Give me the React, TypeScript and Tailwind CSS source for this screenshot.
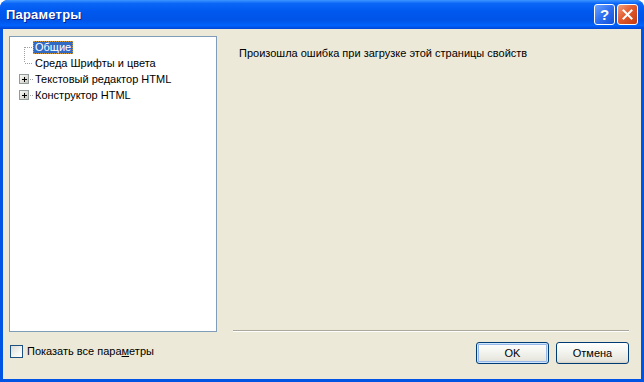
import React from "react";

const Gutter: React.FC<{ kind: "first" | "mid" | "plus" }> = ({ kind }) => (
  <svg width="23" height="16" viewBox="0 0 23 16" shapeRendering="crispEdges" className="shrink-0">
    {kind === "first" && (
      <line x1="14.5" y1="8" x2="14.5" y2="16" stroke="#a0a0a0" strokeDasharray="1 1" />
    )}
    {kind === "mid" && (
      <line x1="14.5" y1="0" x2="14.5" y2="8" stroke="#a0a0a0" strokeDasharray="1 1" />
    )}
    {kind === "plus" ? (
      <>
        <line x1="18" y1="8.5" x2="23" y2="8.5" stroke="#a0a0a0" strokeDasharray="1 1" />
        <rect x="9.5" y="3.5" width="9" height="9" fill="url(#pb)" stroke="#919b9c" />
        <line x1="12" y1="8.5" x2="17" y2="8.5" stroke="#000" />
        <line x1="14.5" y1="6" x2="14.5" y2="11" stroke="#000" />
        <defs>
          <linearGradient id="pb" x1="0" y1="0" x2="1" y2="1">
            <stop offset="0" stopColor="#ffffff" />
            <stop offset="1" stopColor="#c6c5b8" />
          </linearGradient>
        </defs>
      </>
    ) : (
      <line x1="15" y1="8.5" x2="23" y2="8.5" stroke="#a0a0a0" strokeDasharray="1 1" />
    )}
  </svg>
);

const TreeRow: React.FC<{ kind: "first" | "mid" | "plus"; label: string; selected?: boolean }> = ({
  kind,
  label,
  selected,
}) => (
  <div className="flex items-center h-[16px]">
    <Gutter kind={kind} />
    <span
      className={
        selected
          ? "px-[1px] leading-[11px] h-[13px] bg-[#316ac5] text-white border border-dotted border-[#ce953a]"
          : "px-[2px] leading-[13px] text-black"
      }
    >
      {label}
    </span>
  </div>
);

const XpButton: React.FC<{ label: string; primary?: boolean }> = ({ label, primary }) => (
  <button
    className={
      "w-[73px] h-[22px] rounded-[3px] border border-[#003c74] text-[11px] text-black bg-[linear-gradient(to_bottom,#ffffff_0%,#f5f5f1_40%,#e6e5dc_90%,#d6d0c5_100%)] " +
      (primary ? "shadow-[inset_0_0_0_1px_#cee7ff,inset_0_0_0_2px_#98b8ea]" : "")
    }
  >
    {label}
  </button>
);

export default function App() {
  return (
    <div
      className="w-[644px] h-[382px] flex flex-col overflow-hidden rounded-t-[8px] bg-[#0054e3] text-[11px]"
      style={{ fontFamily: '"Liberation Sans", Arial, sans-serif' }}
    >
      <div className="h-[29px] shrink-0 flex items-center pl-[6px] pr-[6px] bg-[linear-gradient(to_bottom,#3d95ff_0%,#0a66f7_12%,#0058ee_40%,#0054e7_70%,#0062fc_88%,#0045d6_100%)]">
        <span className="text-white font-bold text-[13px] tracking-[0.2px] [text-shadow:1px_1px_0_#0a1e8a]">
          Параметры
        </span>
        <div className="ml-auto flex gap-[2px] mt-[-1px]">
          <div className="w-[21px] h-[21px] rounded-[3px] border border-white bg-[linear-gradient(135deg,#6fa3ff_0%,#2d6ff0_50%,#1450d8_100%)] flex items-center justify-center text-white font-bold text-[15px] leading-none">
            ?
          </div>
          <div className="w-[21px] h-[21px] rounded-[3px] border border-white bg-[linear-gradient(135deg,#f1a07e_0%,#e35a2e_45%,#c23a0e_100%)] flex items-center justify-center">
            <svg width="11" height="11" viewBox="0 0 11 11">
              <path d="M1.5 1.5 L9.5 9.5 M9.5 1.5 L1.5 9.5" stroke="#fff" strokeWidth="2" strokeLinecap="square" />
            </svg>
          </div>
        </div>
      </div>
      <div className="flex-1 mx-[3px] mb-[3px] bg-[#ece9d8] flex flex-col">
        <div className="flex pl-[6px] pr-[12px] pt-[7px] gap-[16px]">
          <div className="w-[208px] h-[296px] shrink-0 border border-[#7f9db9] bg-white pt-[2px]">
            <TreeRow kind="first" label="Общие" selected />
            <TreeRow kind="mid" label="Среда Шрифты и цвета" />
            <TreeRow kind="plus" label="Текстовый редактор HTML" />
            <TreeRow kind="plus" label="Конструктор HTML" />
          </div>
          <div className="flex-1 flex flex-col justify-between">
            <div className="pt-[11px] pl-[6px] leading-[13px] text-black">
              Произошла ошибка при загрузке этой страницы свойств
            </div>
            <div className="border-t border-[#aca899] border-b border-b-white" />
          </div>
        </div>
        <div className="flex items-center pl-[7px] pr-[12px] pt-[10px]">
          <div className="flex items-center gap-[4px] mt-[-3px]">
            <div className="w-[13px] h-[13px] border border-[#1c5180] bg-[linear-gradient(135deg,#dcdcd7_0%,#f4f4f0_60%,#ffffff_100%)]" />
            <span className="text-black leading-[13px]">
              Показать все пара<span className="underline underline-offset-[1px]">м</span>етры
            </span>
          </div>
          <div className="ml-auto flex gap-[7px]">
            <XpButton label="OK" primary />
            <XpButton label="Отмена" />
          </div>
        </div>
      </div>
    </div>
  );
}
